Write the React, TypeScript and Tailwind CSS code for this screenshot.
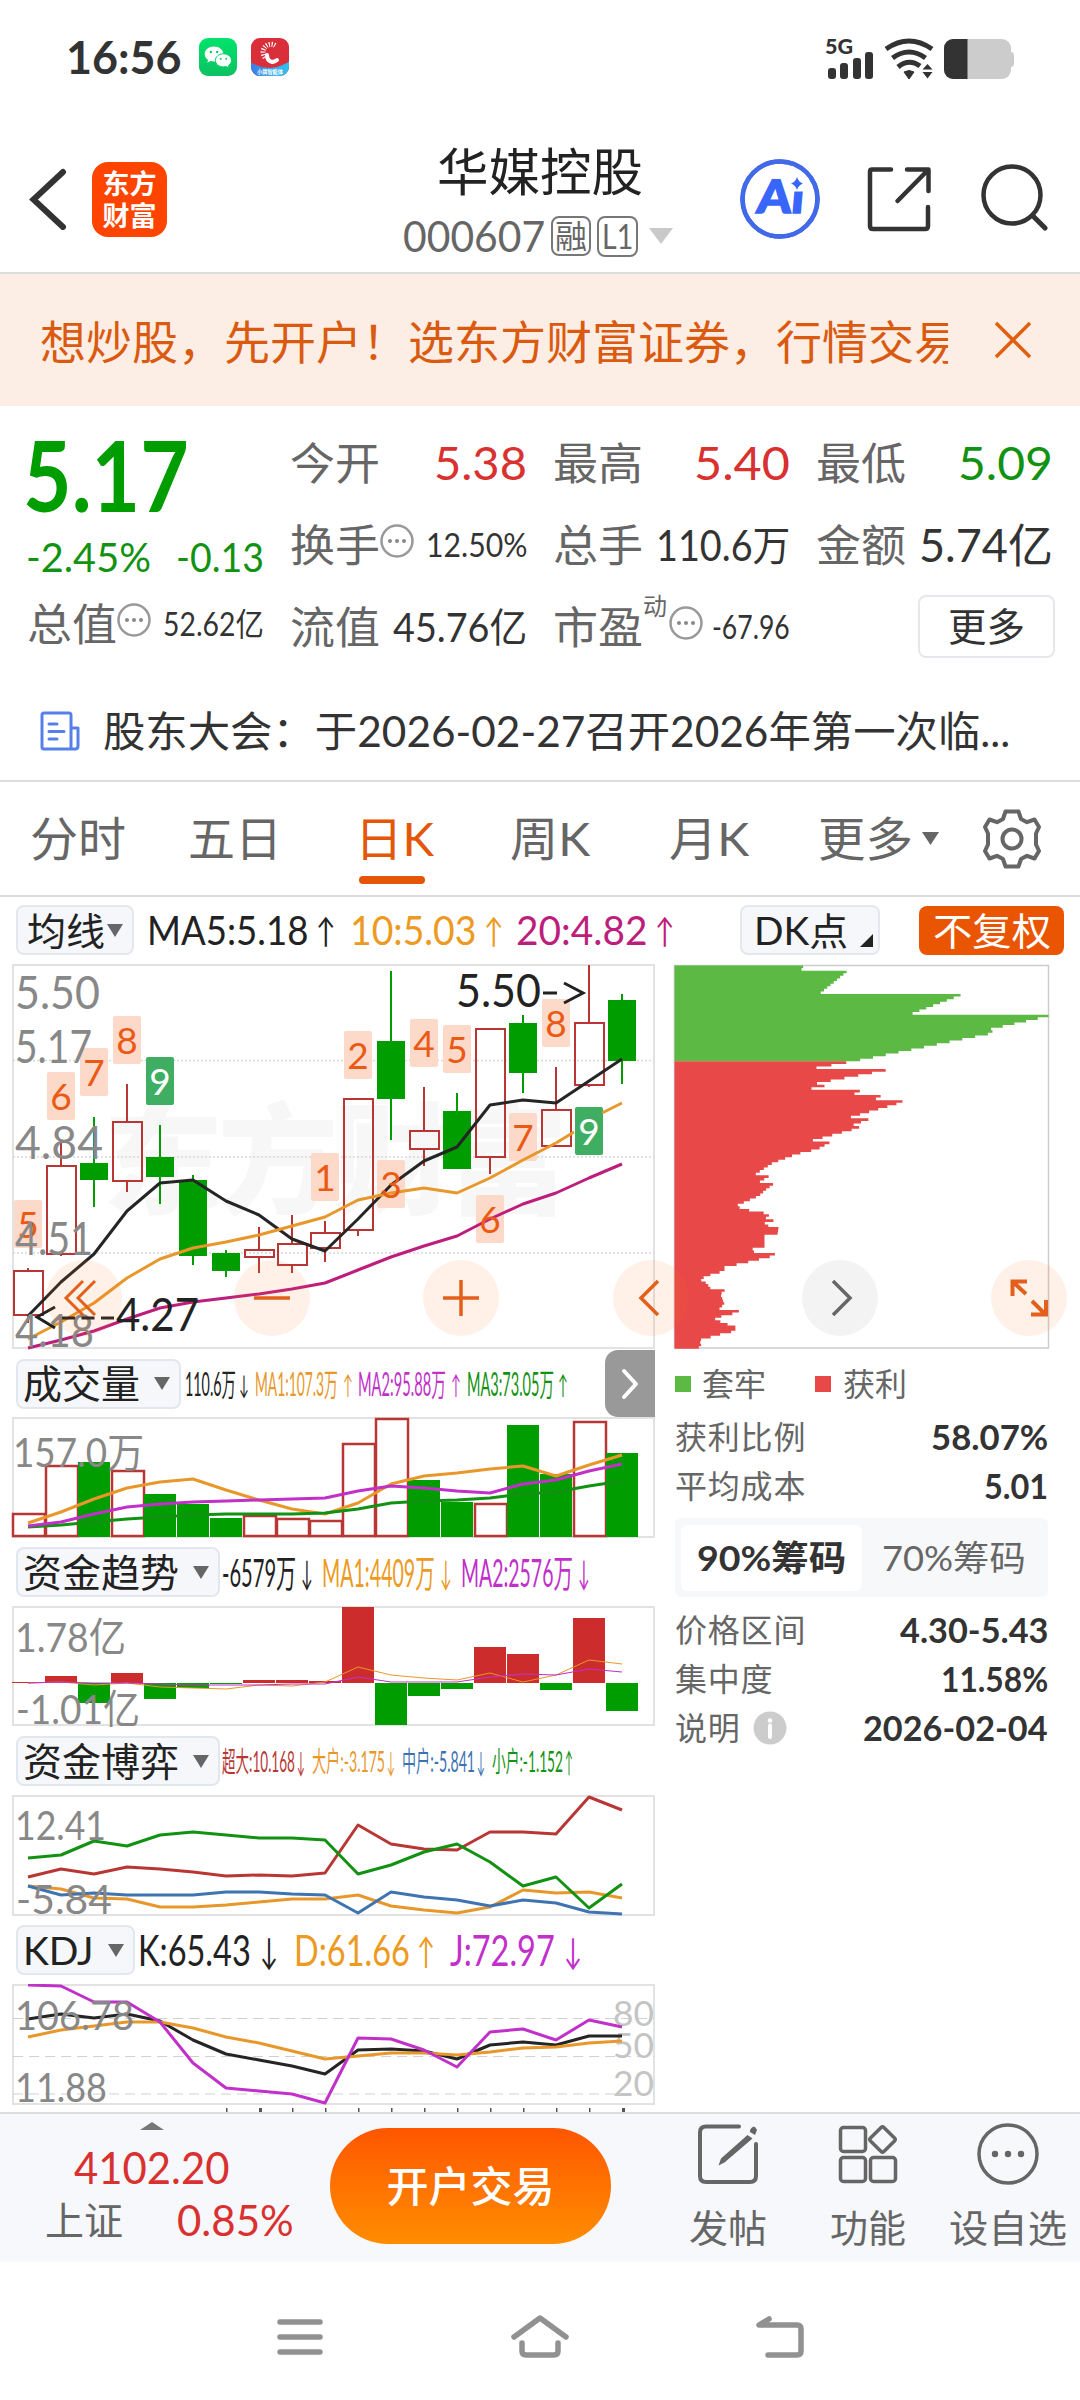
import { useLayoutEffect, useRef, type ReactNode } from 'react';
import clsx from 'clsx';

const STEP = 33;
const cx = (i: number) => 28 + STEP * i;

const RED = '#b83735';
const GREEN = '#009d00';
const ORANGE = '#e8972a';
const MAGENTA = '#bd1e7c';
const PURPLE = '#c130c9';

// [up, high, bodyTop, bodyBottom, low]
const candles: [boolean, number, number, number, number][] = [
  [true, 1268, 1271, 1315, 1323],
  [true, 1142, 1166, 1254, 1256],
  [false, 1117, 1163, 1180, 1207],
  [true, 1084, 1122, 1181, 1192],
  [false, 1125, 1157, 1177, 1204],
  [false, 1175, 1180, 1256, 1265],
  [false, 1250, 1253, 1271, 1277],
  [true, 1227, 1250, 1257, 1273],
  [true, 1215, 1244, 1265, 1273],
  [true, 1221, 1233, 1248, 1262],
  [true, 1099, 1099, 1230, 1236],
  [false, 971, 1041, 1099, 1140],
  [true, 1087, 1131, 1149, 1166],
  [false, 1093, 1111, 1169, 1169],
  [true, 1029, 1029, 1157, 1174],
  [false, 1015, 1023, 1073, 1093],
  [true, 1067, 1110, 1146, 1146],
  [true, 965, 1023, 1085, 1087],
  [false, 994, 1000, 1061, 1084],
];
const ma5 = [1316, 1282, 1254, 1211, 1183, 1180, 1201, 1215, 1239, 1251, 1219, 1185, 1161, 1147, 1105, 1100, 1103, 1081, 1059];
const ma10 = [1339, 1322, 1303, 1278, 1259, 1248, 1242, 1235, 1226, 1217, 1200, 1193, 1188, 1193, 1178, 1160, 1143, 1122, 1103];
const ma20 = [1348, 1340, 1331, 1319, 1308, 1302, 1298, 1294, 1289, 1283, 1270, 1257, 1246, 1236, 1219, 1204, 1193, 1178, 1164];

// [candle index, top, digit]
const badges: [number, number, string][] = [
  [0, 1200, '5'], [1, 1072, '6'], [2, 1048, '7'], [3, 1016, '8'], [4, 1057, '9'],
  [9, 1153, '1'], [10, 1031, '2'], [11, 1160, '3'], [12, 1019, '4'], [13, 1025, '5'],
  [14, 1195, '6'], [15, 1113, '7'], [16, 999, '8'], [17, 1107, '9'],
];

const volumes: [boolean, number][] = [
  [true, 1514], [true, 1466], [false, 1462], [true, 1471], [false, 1494], [false, 1504], [false, 1518],
  [true, 1516], [true, 1519], [true, 1521], [true, 1444], [true, 1419], [false, 1480], [false, 1502],
  [true, 1504], [false, 1425], [false, 1474], [true, 1422], [false, 1453],
];
const volMa1 = [1523, 1512, 1499, 1488, 1482, 1479, 1490, 1500, 1509, 1514, 1503, 1484, 1476, 1473, 1469, 1466, 1476, 1465, 1455];
const volMa2 = [1526, 1522, 1514, 1507, 1504, 1502, 1501, 1500, 1499, 1498, 1491, 1486, 1488, 1491, 1493, 1484, 1480, 1471, 1464];
const volMa3 = [1527, 1525, 1522, 1519, 1517, 1515, 1514, 1514, 1514, 1513, 1509, 1503, 1501, 1500, 1498, 1494, 1492, 1486, 1481];

const flows = [1682, 1676, 1703, 1673, 1699, 1688, 1684, 1680, 1680, 1681, 1607, 1725, 1696, 1689, 1647, 1654, 1690, 1618, 1711];
const flowMa1 = [1683, 1682, 1685, 1683, 1687, 1688, 1689, 1685, 1686, 1682, 1667, 1675, 1678, 1680, 1673, 1682, 1675, 1660, 1664];
const flowMa2 = [1683, 1682, 1683, 1683, 1684, 1685, 1685, 1685, 1684, 1684, 1677, 1682, 1682, 1682, 1677, 1674, 1675, 1669, 1672];

const gameHuge = [1877, 1869, 1874, 1867, 1869, 1872, 1876, 1875, 1876, 1873, 1825, 1844, 1849, 1850, 1832, 1832, 1834, 1797, 1810];
const gameSmall = [1858, 1855, 1841, 1846, 1835, 1832, 1835, 1838, 1838, 1840, 1874, 1865, 1852, 1844, 1862, 1886, 1877, 1908, 1884];
const gameMid = [1886, 1895, 1893, 1895, 1895, 1895, 1892, 1892, 1894, 1895, 1913, 1892, 1897, 1900, 1906, 1900, 1903, 1912, 1914];
const gameBig = [1886, 1889, 1898, 1899, 1907, 1907, 1905, 1902, 1899, 1899, 1895, 1906, 1910, 1913, 1907, 1890, 1893, 1892, 1898];

const kdjK = [2019, 2014, 2018, 2014, 2021, 2040, 2054, 2060, 2066, 2074, 2050, 2049, 2051, 2059, 2045, 2042, 2045, 2036, 2036];
const kdjD = [2037, 2030, 2026, 2022, 2022, 2028, 2037, 2043, 2051, 2059, 2056, 2053, 2053, 2055, 2052, 2048, 2047, 2043, 2041];
const kdjJ = [1985, 1986, 2002, 2002, 2022, 2063, 2088, 2091, 2094, 2103, 2038, 2039, 2050, 2067, 2032, 2029, 2040, 2020, 2027];

// outline of the chip distribution, [y, width]
const chips: [number, number][] = [
  [0, 129], [5, 126], [5.1, 173], [27.5, 145], [27.6, 290], [48, 236], [48.1, 374], [50, 374], [64, 311], [64.1, 318], [67, 318],
  [95, 180], [103, 134], [103.1, 217], [118, 138], [118.1, 150], [122, 150], [122.1, 137], [124, 137], [124.1, 187],
  [129, 177], [129.1, 208], [134, 199], [134.1, 230], [137, 225], [151.5, 174], [151.6, 199], [159, 178], [159.1, 190],
  [163, 180], [174.5, 137], [174.6, 159], [183, 143], [188, 122], [197, 98], [208, 81], [208.1, 98], [217, 83],
  [217.1, 100], [223, 92], [230, 84], [239, 63], [242.4, 66], [242.5, 80], [246, 68], [246.1, 88], [250, 96], [254, 86],
  [254.1, 100], [258, 87], [262, 104], [268, 103], [269, 90], [282, 90], [283, 77], [286, 80], [286.1, 103], [290, 98],
  [297, 69], [301, 50], [305, 50], [308, 38], [313, 25], [317, 32], [322, 36], [323.5, 36], [323.6, 51], [328, 46],
  [333, 48], [338, 50], [342, 45], [343.5, 45], [343.6, 68], [348, 57], [352, 39], [356, 47], [361, 62], [365, 60],
  [368, 47], [374, 25], [380, 27], [383, 21],
];

const ROW = 2.59;
const chipRows = Array.from({ length: 148 }, (_, i) => {
  const y = i * ROW + 0.6;
  const k = Math.max(1, chips.findIndex(([py]) => py >= y));
  const [y0, w0] = chips[k - 1];
  const [y1, w1] = chips[k];
  return w0 + ((w1 - w0) * (y - y0)) / (y1 - y0);
});

// stepped area for the rows from..to
const chipArea = (from: number, to: number) => {
  const top = 965.5 + from * ROW;
  const steps = chipRows.slice(from, to).map((w, i) => `H${674.5 + w}V${top + (i + 1) * ROW}`);
  return `M674.5 ${top}${steps.join('')}H674.5z`;
};

const points = (ys: number[]) => ys.map((y, i) => `${cx(i)},${y}`).join(' ');

/** Squeezes or stretches a single line of text to the width of its box. */
function Fit({ className, children }: { className?: string; children: ReactNode }) {
  const outer = useRef<HTMLSpanElement>(null);
  const inner = useRef<HTMLSpanElement>(null);

  useLayoutEffect(() => {
    if (!outer.current || !inner.current) return;
    const ratio = outer.current.clientWidth / inner.current.offsetWidth;
    inner.current.style.transform = `scaleX(${ratio})`;
  }, [children]);

  return (
    <span ref={outer} className={clsx('inline-flex shrink-0 leading-none', className)}>
      <span ref={inner} className="inline-block shrink-0 origin-left whitespace-nowrap">{children}</span>
    </span>
  );
}

function Line({ ys, color, width = 3 }: { ys: number[]; color: string; width?: number }) {
  return <polyline points={points(ys)} fill="none" stroke={color} strokeWidth={width} strokeLinejoin="round" />;
}

function Label({ x, y, w, size = 46, color = '#888', children }: { x: number; y: number; w: number; size?: number; color?: string; children: string }) {
  return (
    <text x={x} y={y} textLength={w} lengthAdjust="spacingAndGlyphs" fontSize={size} fill={color}>{children}</text>
  );
}

function Frame({ top, bottom }: { top: number; bottom: number }) {
  return <rect x="13" y={top} width="641" height={bottom - top} fill="none" stroke="#e2e2e2" strokeWidth="2" />;
}

function Dots({ className }: { className?: string }) {
  return (
    <svg viewBox="0 0 34 34" className={clsx('size-[34px] shrink-0', className)}>
      <circle cx="17" cy="17" r="15.5" fill="none" stroke="#999" strokeWidth="2.5" />
      <circle cx="10" cy="17" r="2" fill="#888" />
      <circle cx="17" cy="17" r="2" fill="#888" />
      <circle cx="24" cy="17" r="2" fill="#888" />
    </svg>
  );
}

function Triangle({ className }: { className?: string }) {
  return (
    <svg viewBox="0 0 16 13" preserveAspectRatio="none" className={clsx('h-[13px] w-4 shrink-0 fill-[#666]', className)}>
      <path d="M0 0h16L8 13z" />
    </svg>
  );
}

function StatusBar() {
  return (
    <div className="flex h-[114px] items-center pl-[66px] pr-[65px] text-[#333]">
      <Fit className="w-[116px] text-[46px] font-bold">16:56</Fit>
      <svg viewBox="0 0 40 40" className="ml-4 size-10">
        <defs>
          <linearGradient id="wx" x1="0" y1="0" x2="0" y2="1">
            <stop offset="0" stopColor="#00e46c" />
            <stop offset="1" stopColor="#0cc160" />
          </linearGradient>
        </defs>
        <rect x="1" y="1" width="38" height="38" rx="9" fill="url(#wx)" />
        <path d="M16 9.500c-5.300 0-9.300 3.300-9.300 7.500 0 2.400 1.300 4.500 3.400 5.900l-.8 2.800 3.300-1.700c1.100.3 2.200.5 3.400.5 5.200 0 9.300-3.300 9.300-7.500s-4.100-7.500-9.300-7.500z" fill="#fff" />
        <path d="M25.500 16.800c-4.600 0-8.100 2.900-8.100 6.600s3.500 6.500 8.100 6.500c1 0 2-.2 2.900-.4l2.800 1.500-.7-2.500c1.800-1.200 3-3 3-5.100 0-3.700-3.500-6.600-8-6.600z" fill="#fff" stroke="#05d066" strokeWidth="1" />
        <g fill="#05d066">
          <circle cx="12.800" cy="15" r="1.200" />
          <circle cx="19.200" cy="15" r="1.200" />
          <circle cx="22.700" cy="21.800" r="1" />
          <circle cx="28.200" cy="21.800" r="1" />
        </g>
      </svg>
      <svg viewBox="0 0 40 40" className="ml-3 size-10">
        <defs>
          <clipPath id="round"><rect x="1" y="1" width="38" height="38" rx="9" /></clipPath>
          <linearGradient id="sea" x1="0" y1="0" x2="1" y2="0">
            <stop offset="0" stopColor="#3a7de8" />
            <stop offset="1" stopColor="#2ec4f0" />
          </linearGradient>
        </defs>
        <g clipPath="url(#round)">
          <rect width="40" height="40" fill="#d92f3a" />
          <path d="M0 25Q20 37 40 24V40H0z" fill="url(#sea)" />
          <path d="M17 18c0 6 5 9 10 5" fill="none" stroke="#fff" strokeWidth="4" strokeLinecap="round" />
          <path d="M15 20.500a8 8 0 0 1 11-11.500" fill="none" stroke="#fff" strokeWidth="5" strokeDasharray="1.100 1.500" />
          <text x="7" y="37" textLength="26" lengthAdjust="spacingAndGlyphs" fontSize="6" fontWeight="700" fill="#fff">小牌智能体</text>
        </g>
      </svg>
      <svg viewBox="820 30 195 50" className="ml-auto h-[50px] w-[195px]">
        <text x="825" y="52" fontSize="20" fontWeight="900" textLength="28" lengthAdjust="spacingAndGlyphs" fill="#333">5G</text>
        <g fill="#333">
          <rect x="828" y="66" width="8" height="11" rx="3" />
          <rect x="840" y="61" width="8" height="16" rx="3" />
          <rect x="853" y="56" width="8" height="21" rx="3" />
          <rect x="865" y="50" width="8" height="27" rx="3" />
          <path d="M904 70Q909 67 914 70L909 77z" stroke="#333" strokeWidth="1" />
          <path d="M922.500 67.500l5-5.500 5 5.500zM922.500 70l5 6.500 5-6.500z" />
        </g>
        <g fill="none" stroke="#333" strokeWidth="5">
          <path d="M886 47Q909 31 932 47" />
          <path d="M892.500 56Q909 44 925.500 56" />
          <path d="M898 65Q909 56 920 64" />
        </g>
        <rect x="944" y="37" width="67" height="40" rx="9" fill="#ccc" />
        <path d="M953 37h14.500v40H953a9 9 0 0 1-9-9V46a9 9 0 0 1 9-9z" fill="#333" />
        <path d="M1011 50q3 0 3 4v7q0 4-3 4z" fill="#ccc" />
      </svg>
    </div>
  );
}

function Header() {
  return (
    <div className="flex h-40 items-start border-b-2 border-[#dcdcdc] pl-[29px] pr-8">
      <svg viewBox="29 168 38 62" className="mt-[54px] h-[62px] w-[38px]">
        <path d="M63 172L33.500 199.500 63 227" fill="none" stroke="#333" strokeWidth="6" strokeLinecap="round" />
      </svg>
      <div className="ml-[25px] mt-12 grid size-[75px] place-content-center gap-[5px] rounded-[16px] bg-[#ff4400] text-white">
        <Fit className="w-[54px] text-[27px] font-bold">东方</Fit>
        <Fit className="w-[54px] text-[27px] font-bold">财富</Fit>
      </div>
      <div className="ml-[236px] mt-8 flex flex-col text-[#666]">
        <Fit className="ml-[34px] w-[206px] text-[51px] text-[#222]">华媒控股</Fit>
        <div className="mt-[18px] flex items-center">
          <Fit className="w-[142px] text-[42px]">000607</Fit>
          <span className="ml-[6px] grid size-10 place-content-center rounded-[8px] border-2 border-[#777] text-[32px] leading-none">融</span>
          <span className="ml-[6px] grid size-[41px] place-content-center rounded-[8px] border-2 border-[#777]">
            <Fit className="w-[31px] text-[34px]">L1</Fit>
          </span>
          <Triangle className="ml-[11px] h-[16px] w-[24px] fill-[#c9c9c9]" />
        </div>
      </div>
      <svg viewBox="740 158 80 82" className="ml-auto mt-11 h-[82px] w-20">
        <circle cx="780" cy="199" r="37.500" fill="none" stroke="#4169e8" strokeWidth="4.500" />
        <text x="756" y="213" transform="translate(18.600) skewX(-5)" fontSize="46" fontWeight="900" textLength="47" lengthAdjust="spacingAndGlyphs" fill="#3866fb" stroke="#3866fb" strokeWidth="1.500">Ai</text>
        <rect x="787" y="172" width="22" height="19.500" fill="#fff" />
        <circle cx="780" cy="199" r="37.500" fill="none" stroke="#4169e8" strokeWidth="4.500" />
        <path d="M797 177q1.500 5 6 6.500-4.500 1.500-6 6.500-1.500-5-6-6.500 4.500-1.500 6-6.500z" fill="#3866fb" />
      </svg>
      <svg viewBox="866 165 68 68" className="ml-[46px] mt-[51px] size-[68px]">
        <g fill="none" stroke="#333" strokeWidth="4.500" strokeLinecap="round" strokeLinejoin="round">
          <path d="M891 169.500H872q-2 0-2 2V226q0 3 3 3h52q3 0 3-3V207" />
          <path d="M907 169.500h21.500V191M928 170L897.500 201" />
        </g>
      </svg>
      <svg viewBox="980 163 68 68" className="ml-[46px] mt-[49px] size-[68px]">
        <circle cx="1012" cy="195" r="28.500" fill="none" stroke="#333" strokeWidth="4.500" />
        <path d="M1033 216L1045 228" stroke="#333" strokeWidth="5" strokeLinecap="round" />
      </svg>
    </div>
  );
}

function Banner() {
  return (
    <div className="flex h-[132px] items-center bg-[#fdeee5] pl-10 text-[#da5a10]">
      <div className="w-[908px] overflow-hidden pb-1 pt-2">
        <Fit className="w-[920px] text-[46px]">想炒股，先开户！选东方财富证券，行情交易</Fit>
      </div>
      <svg viewBox="0 0 40 40" className="ml-[45px] size-10">
        <path d="M3 3L37 37M37 3L3 37" stroke="#e0600f" strokeWidth="3.500" />
      </svg>
    </div>
  );
}

function Stat({ label, labelExtra, children }: { label: string; labelExtra?: ReactNode; children: ReactNode }) {
  return (
    <div className="flex h-[82px] items-center">
      <Fit className="w-[90px] text-[44px]">{label}</Fit>
      {labelExtra}
      <div className="ml-auto flex">{children}</div>
    </div>
  );
}

function Stats() {
  return (
    <div className="grid h-[258px] grid-cols-[237px_237px_237px_237px] gap-x-[26px] pl-[27px] text-[#666]">
      <div className="flex flex-col pt-5">
        <Fit className="-ml-1 w-[166px] text-[97px] font-bold text-[#009d00]">5.17</Fit>
        <div className="mt-[14px] flex justify-between text-[#129212]">
          <Fit className="-ml-px w-[125px] text-[40px]">-2.45%</Fit>
          <Fit className="w-[88px] text-[40px]">-0.13</Fit>
        </div>
        <div className="mt-[6px]">
          <Stat label="总值" labelExtra={<Dots className="mb-2" />}>
            <Fit className="w-[101px] text-[32px] text-[#333]">52.62亿</Fit>
          </Stat>
        </div>
      </div>
      <div className="pt-4">
        <Stat label="今开">
          <Fit className="w-[93px] text-[46px] text-[#d93030]">5.38</Fit>
        </Stat>
        <Stat label="换手" labelExtra={<Dots className="mb-2" />}>
          <Fit className="w-[101px] text-[32px] text-[#333]">12.50%</Fit>
        </Stat>
        <Stat label="流值">
          <Fit className="w-[134px] text-[40px] text-[#333]">45.76亿</Fit>
        </Stat>
      </div>
      <div className="pt-4">
        <Stat label="最高">
          <Fit className="w-[96px] text-[46px] text-[#d93030]">5.40</Fit>
        </Stat>
        <Stat label="总手">
          <Fit className="w-[134px] text-[42px] text-[#333]">110.6万</Fit>
        </Stat>
        <Stat
          label="市盈"
          labelExtra={
            <>
              <Fit className="w-[24px] -translate-y-[21px] text-[24px]">动</Fit>
              <Dots className="mb-2 ml-[2px]" />
            </>
          }
        >
          <Fit className="w-[78px] text-[32px] text-[#333]">-67.96</Fit>
        </Stat>
      </div>
      <div className="pt-4">
        <Stat label="最低">
          <Fit className="w-[95px] text-[46px] text-[#129212]">5.09</Fit>
        </Stat>
        <Stat label="金额">
          <Fit className="w-[134px] text-[46px] text-[#333]">5.74亿</Fit>
        </Stat>
        <div className="-mr-[2px] ml-auto mt-[9px] grid h-[63px] w-[137px] place-content-center rounded-[8px] border-2 border-[#e6e7ea] text-[#333]">
          <Fit className="w-[77px] text-[39px]">更多</Fit>
        </div>
      </div>
    </div>
  );
}

function News() {
  return (
    <div className="flex h-[118px] items-center border-b-2 border-[#dcdcdc] pl-10 pt-[18px] text-[#333]">
      <svg viewBox="0 0 40 40" className="size-10">
        <g fill="none" stroke="#5680e8" strokeWidth="3" strokeLinejoin="round">
          <path d="M31 38H4q-2 0-2-2V4q0-2 2-2h25q2 0 2 2v34h4q3 0 3-3V17h-7" />
          <path d="M9 13h8M9 20.500h15M9 28h8" strokeLinecap="round" />
        </g>
      </svg>
      <Fit className="ml-[23px] w-[907px] text-[42px]">股东大会：于2026-02-27召开2026年第一次临...</Fit>
    </div>
  );
}

function Tabs() {
  return (
    <div className="flex h-[115px] items-center border-b-2 border-[#dcdcdc] pl-[30px] text-[#666]">
      <Fit className="w-[96px] text-[47px]">分时</Fit>
      <Fit className="ml-[62px] w-[94px] text-[47px]">五日</Fit>
      <div className="relative ml-[73px] text-[#e55708]">
        <Fit className="w-[79px] text-[47px]">日K</Fit>
        <span className="absolute -bottom-[22px] left-1 h-2 w-[66px] rounded-full bg-[#e55708]" />
      </div>
      <Fit className="ml-[76px] w-[80px] text-[47px]">周K</Fit>
      <Fit className="ml-[79px] w-[80px] text-[47px]">月K</Fit>
      <Fit className="ml-[69px] w-[95px] text-[47px]">更多</Fit>
      <Triangle className="ml-[9px] w-[17px]" />
      <svg viewBox="-30 -30 60 60" className="ml-[43px] size-[60px]">
        <path
          d="M-6.500-27.500H6.500L9-20 15-16.800 22.500-19.500 27-12 24-5.500V5.500L27 12 22.500 19.500 15 16.800 9 20 6.500 27.500H-6.500L-9 20-15 16.800-22.500 19.500-27 12-24 5.500V-5.500L-27-12-22.500-19.500-15-16.800-9-20z"
          fill="none" stroke="#666" strokeWidth="4" strokeLinejoin="round"
        />
        <circle r="9.500" fill="none" stroke="#666" strokeWidth="4" />
      </svg>
    </div>
  );
}

function Averages() {
  return (
    <div className="flex h-[66px] items-center pl-4 text-[#222]">
      <div className="flex h-[50px] w-[118px] items-center rounded-[8px] border-2 border-[#e4e8ec] bg-[#f6f7fa] pl-[9px]">
        <Fit className="w-[78px] text-[38px]">均线</Fit>
        <Triangle className="ml-[2px]" />
      </div>
      <Fit className="ml-[13px] w-[161px] text-[40px]">MA5:5.18</Fit>
      <Fit className="ml-2 w-[20px] text-[34px]">↑</Fit>
      <Fit className="ml-[14px] w-[126px] text-[40px] text-[#ec9a22]">10:5.03</Fit>
      <Fit className="ml-2 w-[20px] text-[34px] text-[#ec9a22]">↑</Fit>
      <Fit className="ml-[12px] w-[131px] text-[40px] text-[#bd1e7c]">20:4.82</Fit>
      <Fit className="ml-2 w-[20px] text-[34px] text-[#bd1e7c]">↑</Fit>
      <div className="ml-[65px] flex h-[50px] w-[140px] items-center rounded-[8px] border-2 border-[#e4e8ec] bg-[#f6f7fa] pl-[12px]">
        <Fit className="w-[94px] text-[38px]">DK点</Fit>
        <svg viewBox="0 0 13 13" className="ml-3 mt-5 size-[13px]"><path d="M13 0V13H0z" fill="#222" /></svg>
      </div>
      <div className="ml-[39px] grid h-[49px] w-[145px] place-content-center rounded-[8px] bg-[#ea5504] text-white">
        <Fit className="w-[118px] text-[38px]">不复权</Fit>
      </div>
    </div>
  );
}

function CandleChart() {
  return (
    <svg viewBox="0 963 660 387" className="h-[387px] w-[660px]">
      <text x="103" y="1205" fontSize="120" fontWeight="900" textLength="465" fill="#f7f7f7">东方财富</text>
      <Frame top={965} bottom={1348} />
      {[1060.5, 1157, 1253].map((y) => (
        <path key={y} d={`M13 ${y}H654`} stroke="#d8d8d8" strokeWidth="1.500" strokeDasharray="2 2" />
      ))}
      {candles.map(([up, high, top, bottom, low], i) => (
        <g key={i} stroke={up ? RED : GREEN} strokeWidth="2">
          <path d={`M${cx(i)} ${high}V${top}M${cx(i)} ${bottom}V${low}`} />
          {up ? (
            <rect x={cx(i) - 14} y={top} width="29" height={bottom - top} fill="none" />
          ) : (
            <rect x={cx(i) - 14} y={top} width="28" height={bottom - top} fill={GREEN} stroke="none" />
          )}
        </g>
      ))}
      {badges.map(([i, y, n]) => (
        <rect key={i} x={cx(i) - 14} y={y} width="28" height="48" rx="2" fill={n === '9' ? '#3fae63' : '#fdd9c9'} />
      ))}
      <Line ys={ma5} color="#252525" />
      <Line ys={ma10.slice(0, 17)} color={ORANGE} />
      <path d="M556 1143L574 1132M602 1113L622 1103" stroke={ORANGE} strokeWidth="3" />
      <Line ys={ma20} color={MAGENTA} />
      {badges.map(([i, y, n]) => (
        <text key={i} x={cx(i)} y={y + 38} fontSize="37" textAnchor="middle" fill={n === '9' ? '#fff' : '#ea5a14'}>{n}</text>
      ))}
      <Label x={15} y={1009} w={85}>5.50</Label>
      <Label x={15} y={1063} w={77}>5.17</Label>
      <Label x={15} y={1159} w={88}>4.84</Label>
      <Label x={15} y={1255} w={78}>4.51</Label>
      <Label x={15} y={1347} w={79}>4.18</Label>
      <Label x={456} y={1007} w={85} color="#222">5.50</Label>
      <path d="M543 993H557M564 983L583 993 564 1003" fill="none" stroke="#222" strokeWidth="3" />
      <path d="M55 1307L37 1317 55 1328" fill="none" stroke="#222" strokeWidth="3" />
      <path d="M62 1318H114" stroke="#222" strokeWidth="3" strokeDasharray="13 6.500" />
      <Label x={116} y={1331} w={83} color="#222">4.27</Label>
    </svg>
  );
}

function ChipChart() {
  return (
    <svg viewBox="672 963 408 387" className="h-[387px] w-[408px]">
      <rect x="674.500" y="965.500" width="374" height="382.500" fill="none" stroke="#ccc" strokeWidth="1.500" />
      <path d={chipArea(0, 37)} fill="#5cb943" />
      <path d={chipArea(37, 148)} fill="#e84848" />
    </svg>
  );
}

// round buttons floating over the lower edge of both charts
function ChartControls() {
  const centers = [84, 272, 461, 651, 840, 1029];
  return (
    <svg viewBox="0 1258 1080 80" className="absolute left-0 top-[295px] h-20 w-[1080px]">
      {centers.map((x) => (
        <circle key={x} cx={x} cy="1298" r="38" fill={x === 840 ? '#888' : '#ff6a20'} fillOpacity="0.1" />
      ))}
      <g fill="none" stroke="#e2601c" strokeWidth="3">
        <path d="M83 1281L66 1298 83 1315M95 1281L78 1298 95 1315" />
        <path d="M254 1298H290M443 1298H479M461 1280V1316" strokeWidth="3.500" />
        <path d="M658 1281L641 1298 658 1315" strokeWidth="3.500" />
        <path d="M833 1281L850 1298 833 1315" stroke="#666" strokeWidth="3.500" />
        <path d="M1012.500 1296V1281.500H1027M1013 1282L1026 1294M1046 1300V1314.500H1031M1045 1314L1032 1301" strokeWidth="4" />
      </g>
    </svg>
  );
}

function PanelButton({ className, textClass, children }: { className: string; textClass: string; children: string }) {
  return (
    <div className={clsx('flex h-[50px] shrink-0 items-center rounded-[8px] border-2 border-[#e2e7ee] bg-[#f6f7fa] pl-[5px] text-[#222]', className)}>
      <Fit className={clsx('text-[39px]', textClass)}>{children}</Fit>
      <Triangle className="ml-[14px]" />
    </div>
  );
}

function PanelHead({ className, children }: { className?: string; children: ReactNode }) {
  return <div className={clsx('flex shrink-0 items-center pl-4', className)}>{children}</div>;
}

function Volume() {
  return (
    <>
      <PanelHead className="h-[67px] text-[32px]">
        <PanelButton className="w-[165px]" textClass="w-[117px]">成交量</PanelButton>
        <Fit className="ml-1 w-[51px] text-[#222]">110.6万</Fit>
        <Fit className="ml-[3px] w-[10px] text-[26px] text-[#222]">↓</Fit>
        <Fit className="ml-[6px] w-[83px] text-[#e8972a]">MA1:107.3万</Fit>
        <Fit className="ml-[5px] w-[10px] text-[26px] text-[#e8972a]">↑</Fit>
        <Fit className="ml-[5px] w-[88px] text-[#c130c9]">MA2:95.88万</Fit>
        <Fit className="ml-[5px] w-[10px] text-[26px] text-[#c130c9]">↑</Fit>
        <Fit className="ml-[6px] w-[87px] text-[#129212]">MA3:73.05万</Fit>
        <Fit className="ml-[4px] w-[10px] text-[26px] text-[#129212]">↑</Fit>
        <div className="ml-auto grid h-[67px] w-[50px] place-content-center rounded-l-[13px] bg-[#999]">
          <svg viewBox="0 0 20 34" className="h-[34px] w-5">
            <path d="M4 4L16 17 4 30" fill="none" stroke="#fff" strokeWidth="4" strokeLinecap="round" strokeLinejoin="round" />
          </svg>
        </div>
      </PanelHead>
      <svg viewBox="0 1417 655 121" className="h-[121px] w-[655px]">
        <Frame top={1418} bottom={1537} />
        {volumes.map(([up, top], i) =>
          up ? (
            <rect key={i} x={cx(i) - 15} y={top} width="32" height={1536 - top} fill="none" stroke={RED} strokeWidth="2.500" />
          ) : (
            <rect key={i} x={cx(i) - 16} y={top} width="32" height={1537 - top} fill={GREEN} />
          ),
        )}
        <Line ys={volMa1} color={ORANGE} />
        <Line ys={volMa3} color="#129212" />
        <Line ys={volMa2} color={PURPLE} />
        <Label x={13} y={1467} w={131} size={40}>157.0万</Label>
      </svg>
    </>
  );
}

function Trend() {
  return (
    <>
      <PanelHead className="h-[68px] text-[38px]">
        <PanelButton className="w-[204px]" textClass="w-[156px]">资金趋势</PanelButton>
        <Fit className="ml-[2px] w-[74px] text-[#222]">-6579万</Fit>
        <Fit className="ml-[5px] w-[12px] text-[34px] text-[#222]">↓</Fit>
        <Fit className="ml-[9px] w-[113px] text-[#ec9a22]">MA1:4409万</Fit>
        <Fit className="ml-[5px] w-[12px] text-[34px] text-[#ec9a22]">↓</Fit>
        <Fit className="ml-[9px] w-[112px] text-[#c130c9]">MA2:2576万</Fit>
        <Fit className="ml-[5px] w-[12px] text-[34px] text-[#c130c9]">↓</Fit>
      </PanelHead>
      <svg viewBox="0 1606 655 121" className="h-[121px] w-[655px]">
        <Frame top={1607} bottom={1725} />
        {flows.map((y, i) => (
          <rect
            key={i}
            x={cx(i) - 16}
            y={Math.min(y, 1683)}
            width="32"
            height={Math.abs(y - 1683)}
            fill={y < 1683 ? '#cd2c2c' : GREEN}
          />
        ))}
        <Line ys={flowMa1} color={ORANGE} width={1} />
        <Line ys={flowMa2} color={PURPLE} width={1.2} />
        <Label x={15} y={1652} w={111} size={41}>1.78亿</Label>
        <Label x={16} y={1724} w={124} size={41}>-1.01亿</Label>
      </svg>
    </>
  );
}

function Game() {
  return (
    <>
      <PanelHead className="h-[68px] text-[28px]">
        <PanelButton className="w-[204px]" textClass="w-[156px]">资金博弈</PanelButton>
        <Fit className="ml-[2px] w-[73px] text-[#b83735]">超大:10.168</Fit>
        <Fit className="ml-[2px] w-[8px] text-[#b83735]">↓</Fit>
        <Fit className="ml-[7px] w-[73px] text-[#e8972a]">大户:-3.175</Fit>
        <Fit className="ml-[2px] w-[8px] text-[#e8972a]">↓</Fit>
        <Fit className="ml-[7px] w-[73px] text-[#3b72b0]">中户:-5.841</Fit>
        <Fit className="ml-[2px] w-[8px] text-[#3b72b0]">↓</Fit>
        <Fit className="ml-[7px] w-[71px] text-[#129212]">小户:-1.152</Fit>
        <Fit className="ml-[2px] w-[8px] text-[#129212]">↑</Fit>
      </PanelHead>
      <svg viewBox="0 1795 655 121" className="h-[121px] w-[655px]">
        <Frame top={1796} bottom={1915} />
        <Line ys={gameHuge} color={RED} />
        <Line ys={gameBig} color={ORANGE} />
        <Line ys={gameMid} color="#3f74b2" />
        <Line ys={gameSmall} color="#129212" />
        <Label x={15} y={1840} w={91} size={41}>12.41</Label>
        <Label x={16} y={1914} w={96} size={41}>-5.84</Label>
      </svg>
    </>
  );
}

function Kdj() {
  return (
    <>
      <PanelHead className="h-[68px] text-[42px]">
        <PanelButton className="w-[119px]" textClass="w-[71px]">KDJ</PanelButton>
        <Fit className="ml-[3px] w-[113px] text-[#222]">K:65.43</Fit>
        <Fit className="ml-[9px] w-[18px] text-[36px] text-[#222]">↓</Fit>
        <Fit className="ml-[16px] w-[116px] text-[#ec9a22]">D:61.66</Fit>
        <Fit className="ml-[7px] w-[18px] text-[36px] text-[#ec9a22]">↑</Fit>
        <Fit className="ml-[15px] w-[105px] text-[#c130c9]">J:72.97</Fit>
        <Fit className="ml-[9px] w-[18px] text-[36px] text-[#c130c9]">↓</Fit>
      </PanelHead>
      <svg viewBox="0 1984 655 128" className="h-[128px] w-[655px]">
        <Frame top={1985} bottom={2104} />
        {[2018.5, 2056.5, 2094].map((y) => (
          <path key={y} d={`M13 ${y}H654`} stroke="#d0d0d0" strokeWidth="1.200" strokeDasharray="10 6" />
        ))}
        <Label x={613} y={2026} w={41} size={35} color="#c4c4c4">80</Label>
        <Label x={613} y={2058} w={41} size={35} color="#c4c4c4">50</Label>
        <Label x={613} y={2096} w={41} size={35} color="#c4c4c4">20</Label>
        <Line ys={kdjK} color="#252525" />
        <Line ys={kdjD} color={ORANGE} />
        <Line ys={kdjJ} color={PURPLE} />
        <Label x={15} y={2030} w={119} size={41}>106.78</Label>
        <Label x={15} y={2102} w={92} size={41}>11.88</Label>
        {Array.from({ length: 13 }, (_, i) => (
          <rect key={i} x={226 + i * STEP} y="2108" width={i === 1 || i === 12 ? 3 : 1.5} height="4" fill="#555" />
        ))}
      </svg>
    </>
  );
}

function ChipRow({ label, value, valueClass, info }: { label: string; value: string; valueClass: string; info?: boolean }) {
  return (
    <div className="flex h-[49px] items-center">
      <span className="text-[32px] leading-none tracking-[0.8px]">{label}</span>
      {info && (
        <svg viewBox="0 0 34 34" className="ml-3 size-[34px]">
          <circle cx="17" cy="17" r="16.500" fill="#ccc" />
          <circle cx="17" cy="9.500" r="2.300" fill="#fff" />
          <path d="M17 14.500V26" stroke="#fff" strokeWidth="4" strokeLinecap="round" />
        </svg>
      )}
      <Fit className={clsx('ml-auto text-[35px] font-bold text-[#333]', valueClass)}>{value}</Fit>
    </div>
  );
}

function ChipPanel() {
  return (
    <div className="w-[373px] pt-[9px] text-[#666]">
      <div className="flex h-[50px] items-center text-[32px] leading-none">
        <span className="size-4 bg-[#5cb943]" />
        <span className="ml-[11px]">套牢</span>
        <span className="ml-[49px] size-4 bg-[#e84848]" />
        <span className="ml-[12px]">获利</span>
      </div>
      <div className="mt-[3px]">
        <ChipRow label="获利比例" value="58.07%" valueClass="w-[117px]" />
        <ChipRow label="平均成本" value="5.01" valueClass="w-[64px]" />
      </div>
      <div className="mt-[8px] flex h-[79px] items-center rounded-[6px] bg-[#f7f8fa] px-[6px]">
        <div className="grid h-[66px] w-[181px] place-content-center rounded-[6px] bg-white text-[#333]">
          <Fit className="w-[149px] text-[35px] font-bold">90%筹码</Fit>
        </div>
        <Fit className="ml-[20px] w-[144px] text-[35px]">70%筹码</Fit>
      </div>
      <div className="mt-[8px]">
        <ChipRow label="价格区间" value="4.30-5.43" valueClass="w-[148px]" />
        <ChipRow label="集中度" value="11.58%" valueClass="w-[107px]" />
        <ChipRow label="说明" value="2026-02-04" valueClass="w-[185px]" info />
      </div>
    </div>
  );
}

function BottomBar() {
  return (
    <div className="flex h-[150px] border-t-2 border-[#dcdcdc] bg-[#f6f8fb] text-[#666]">
      <div className="flex w-[330px] flex-col pt-[8px]">
        <svg viewBox="0 0 24 8" className="ml-[140px] h-2 w-6"><path d="M0 8L12 0 24 8z" fill="#777" /></svg>
        <Fit className="ml-[74px] mt-[15px] w-[156px] text-[44px] text-[#d93030]">4102.20</Fit>
        <div className="mt-[10px] flex items-center">
          <Fit className="ml-[45px] w-[78px] text-[39px]">上证</Fit>
          <Fit className="ml-[54px] w-[117px] text-[42px] text-[#d93030]">0.85%</Fit>
        </div>
      </div>
      <div className="mt-[14px] grid h-[116px] w-[281px] place-content-center rounded-full bg-gradient-to-b from-[#ff5500] to-[#ff8c00] text-white">
        <Fit className="w-[168px] text-[42px] font-medium">开户交易</Fit>
      </div>
      <div className="ml-[77px] flex w-[79px] flex-col items-center pt-2">
        <svg viewBox="696 2122 64 64" className="size-16">
          <g fill="none" stroke="#666" strokeWidth="4" strokeLinecap="round" strokeLinejoin="round">
            <path d="M739 2126.500H706q-6 0-6 6V2176q0 6 6 6h44q6 0 6-6V2144" />
          </g>
          <path d="M750 2130q4-7 7 0l-2 5-5-3zM747.500 2135l5 3.500-28 24-6 3 2.500-7z" fill="#666" />
        </svg>
        <Fit className="mt-[22px] w-[78px] text-[38px]">发帖</Fit>
      </div>
      <div className="ml-[63px] flex w-[76px] flex-col items-center pt-2">
        <svg viewBox="837 2122 64 64" className="size-16">
          <g fill="none" stroke="#666" strokeWidth="3.500">
            <rect x="841.500" y="2127.500" width="25" height="24" rx="3" />
            <rect x="841.500" y="2157.500" width="25" height="24" rx="3" />
            <rect x="871.500" y="2157.500" width="25" height="24" rx="3" />
            <rect x="874" y="2130" width="19" height="19" rx="2" transform="rotate(45 883.5 2139.500)" />
          </g>
        </svg>
        <Fit className="mt-[22px] w-[76px] text-[38px]">功能</Fit>
      </div>
      <div className="ml-[43px] flex w-[118px] flex-col items-center pt-2">
        <svg viewBox="978 2122 64 64" className="size-16">
          <circle cx="1010" cy="2154" r="29" fill="none" stroke="#666" strokeWidth="3.500" />
          <circle cx="997" cy="2154" r="3.200" fill="#666" />
          <circle cx="1010" cy="2154" r="3.200" fill="#666" />
          <circle cx="1023" cy="2154" r="3.200" fill="#666" />
        </svg>
        <Fit className="mt-[22px] w-[118px] text-[38px]">设自选</Fit>
      </div>
    </div>
  );
}

function NavBar() {
  return (
    <svg viewBox="0 2262 1080 138" className="h-[138px] w-[1080px]">
      <g fill="none" stroke="#919191" strokeWidth="5.500" strokeLinecap="round" strokeLinejoin="round">
        <path d="M280 2322H320M280 2337H320M280 2352H320" />
        <path d="M514 2337L540 2318 566 2337M522 2343V2351q0 4 4 4h28q4 0 4-4V2343" />
        <path d="M769 2319L759 2325H797q4 0 4 4V2351q0 4-4 4H768" />
      </g>
    </svg>
  );
}

export default function App() {
  return (
    <div className="h-[2400px] w-[1080px] overflow-hidden bg-white font-['Lato','Noto_Sans_CJK_SC',sans-serif]">
      <StatusBar />
      <Header />
      <Banner />
      <Stats />
      <News />
      <Tabs />
      <Averages />
      <div className="relative flex justify-between">
        <CandleChart />
        <ChipChart />
        <ChartControls />
      </div>
      <div className="flex h-[762px] gap-[20px] overflow-hidden">
        <div className="flex w-[655px] flex-col">
          <Volume />
          <Trend />
          <Game />
          <Kdj />
        </div>
        <ChipPanel />
      </div>
      <BottomBar />
      <NavBar />
    </div>
  );
}
